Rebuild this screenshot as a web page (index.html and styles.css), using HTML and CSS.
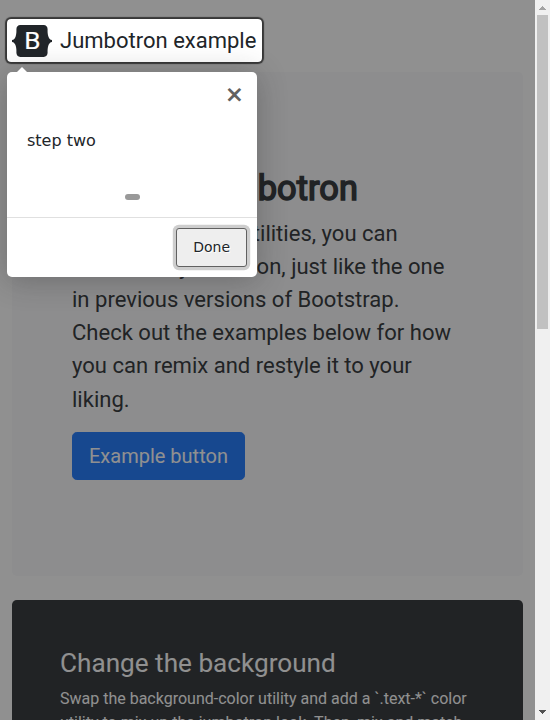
FILE: index.html
```html
<!DOCTYPE html>
<html lang="en">
<head>
<meta charset="utf-8">
<title>Jumbotron example</title>
<link rel="stylesheet" href="styles.css">
</head>
<body>
<div class="window">
  <main class="page">
    <header class="header">
      <a class="brand">
        <svg class="logo" width="40" height="32" viewBox="0 0 118 94" aria-hidden="true">
          <path fill="#212529" d="M24.509 0c-6.733 0-11.715 5.893-11.492 12.284.214 6.14-.064 14.092-2.066 20.577C8.943 39.365 5.547 43.485 0 44.014v5.972c5.547.529 8.943 4.649 10.951 11.153 2.002 6.485 2.28 14.437 2.066 20.577C12.794 88.106 17.776 94 24.51 94H93.5c6.733 0 11.714-5.893 11.491-12.284-.214-6.14.064-14.092 2.066-20.577 2.009-6.504 5.396-10.624 10.943-11.153v-5.972c-5.547-.529-8.934-4.649-10.943-11.153-2.002-6.484-2.28-14.437-2.066-20.577C105.214 5.894 100.233 0 93.5 0H24.508z"/>
          <text class="logo-letter" x="36" y="72" textLength="48" lengthAdjust="spacingAndGlyphs">B</text>
        </svg>
        <span>Jumbotron example</span>
      </a>
    </header>
    <section class="jumbotron">
      <h1>Custom jumbotron</h1>
      <p>Using a series of utilities, you can create this jumbotron, just like the one in previous versions of Bootstrap. Check out the examples below for how you can remix and restyle it to your liking.</p>
      <button class="btn-primary" type="button">Example button</button>
    </section>
    <section class="panel-dark">
      <h2>Change the background</h2>
      <p>Swap the background-color utility and add a `.text-*` color utility to mix up the jumbotron look. Then, mix and match with additional component themes and more.</p>
    </section>
    <div class="highlight"></div>
    <div class="tooltip">
      <div class="arrow"></div>
      <div class="tooltip-header"><a class="close">×</a></div>
      <div class="tooltip-text">step two</div>
      <div class="bullets"><span class="bullet"></span></div>
      <div class="tooltip-footer"><a class="done">Done</a></div>
    </div>
  </main>
  <aside class="scrollbar">
    <svg width="15" height="15" shape-rendering="crispEdges"><path fill="#a3a3a3" d="M4 10V9h1V8h1V7h1V6h1v1h1v1h1v1h1v1z"/></svg>
    <div class="thumb"></div>
    <svg class="down" width="15" height="15" shape-rendering="crispEdges"><path fill="#505050" d="M4 5h7v1h-1v1H9v1H8v1H7V8H6V7H5V6H4z"/></svg>
  </aside>
</div>
</body>
</html>
```
FILE: styles.css
```css
* { box-sizing: border-box; }
body {
  margin: 0;
  overflow: hidden;
  font: 16px/1.5 Roboto, sans-serif;
  color: #212529;
  background: #fff;
}
h1, h2, p { margin: 0; }
.window { display: flex; height: 720px; overflow: hidden; }
.page {
  position: relative;
  flex: 1;
  overflow: hidden;
  padding: 24px 12px 0;
}
.header { height: 48px; }
.brand { display: flex; align-items: center; height: 33px; font-size: 22.03px; }
.logo { margin-right: 8px; }
.logo-letter { font: 400 70px Roboto, sans-serif; fill: #fff; stroke: #fff; stroke-width: .5px; }
.jumbotron {
  height: 503.7px;
  margin-bottom: 24px;
  padding: 96px 60px;
  border-radius: 4.8px;
  background: #f8f9fa;
}
.jumbotron h1 {
  margin-bottom: 8px;
  font-size: 34.35px;
  line-height: 1.2;
  font-weight: 400;
  -webkit-text-stroke: 1.6px #212529;
  letter-spacing: .04px;
}
.jumbotron p { margin-bottom: 16px; font-size: 22.05px; }
.btn-primary {
  display: block;
  height: 48px;
  padding: 8px 16px;
  border: 1px solid #0d6efd;
  border-radius: 4.8px;
  background: #0d6efd;
  color: #fff;
  font: 20px/30px Roboto, sans-serif;
}
.panel-dark {
  height: 300px;
  padding: 48px;
  border-radius: 4.8px;
  background: #212529;
  color: #fff;
}
.panel-dark h2 { margin-bottom: 8px; font-size: 26.15px; line-height: 1.2; font-weight: 400; }
.highlight {
  position: absolute;
  left: 7px;
  top: 19px;
  width: 255px;
  height: 43px;
  border-radius: 4px;
  box-shadow: 0 0 1px 2px rgba(33, 33, 33, .8), 0 0 0 5000px rgba(33, 33, 33, .5);
}
.tooltip {
  position: absolute;
  left: 7px;
  top: 72px;
  width: 250px;
  height: 205px;
  display: flex;
  flex-direction: column;
  border-radius: 5px;
  background: #fff;
  box-shadow: 0 3px 30px rgba(33, 33, 33, .3);
  font-family: "DejaVu Sans", sans-serif;
}
.arrow {
  position: absolute;
  left: 10px;
  top: -10px;
  border: 5px solid transparent;
  border-bottom-color: #fff;
}
.tooltip-header { display: flex; justify-content: flex-end; height: 45px; }
.close { width: 45px; text-align: center; font-size: 23px; line-height: 45px; font-weight: 700; color: #616161; }
.tooltip-text { padding: 12px 20px 0; height: 77px; }
.bullets { flex: 1; display: flex; justify-content: center; align-items: flex-start; }
.bullet { width: 15px; height: 6px; border-radius: 10px; background: #999; }
.tooltip-footer {
  display: flex;
  justify-content: flex-end;
  padding: 10px;
  border-top: 1px solid #e0e0e0;
}
.done {
  padding: 8px 16px;
  border: 1px solid #616161;
  border-radius: 3px;
  background: #eee;
  box-shadow: 0 0 0 3.2px rgba(158, 158, 158, .5);
  font-size: 14px;
  line-height: 21px;
  text-shadow: 1px 1px 0 #fff;
}
.scrollbar { display: flex; flex-direction: column; width: 15px; background: #f0f0f0; }
.scrollbar svg { display: block; flex: none; }
.thumb { width: 11px; height: 314px; margin-left: 2px; background: #c1c1c1; }
.down { margin-top: auto; }
```
